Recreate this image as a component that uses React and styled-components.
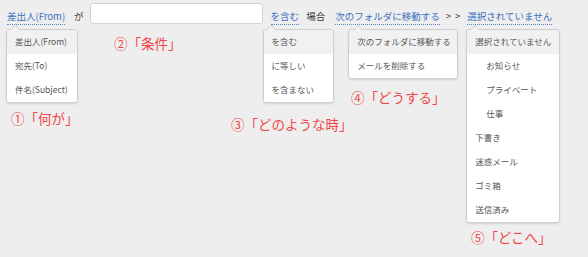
import React from "react";
import styled, { createGlobalStyle } from "styled-components";

const Global = createGlobalStyle`
  html, body { margin: 0; padding: 0; background: #eeeeee; }
  body { font-family: "Noto Sans CJK JP", "Noto Sans", sans-serif; }
`;

const Page = styled.div`
  position: relative;
  width: 588px;
  height: 257px;
  background: #eeeeee;
  overflow: hidden;
`;

const Bar = styled.div`
  display: flex;
  align-items: flex-start;
  padding: 3px 0 0 7px;
  font-size: 9.5px;
  color: #333;
`;

const Trigger = styled.div`
  position: relative;
  margin-top: 7px;
  margin-left: ${(p) => p.$ml || 0}px;
  line-height: 13px;
  padding-bottom: 1px;
  color: #3b6fbf;
  border-bottom: 1px dotted #5a86c9;
  white-space: nowrap;
`;

const Plain = styled.span`
  margin-top: 7px;
  margin-left: ${(p) => p.$ml || 0}px;
  line-height: 13px;
  color: #333;
  white-space: nowrap;
  letter-spacing: ${(p) => p.$ls || 0}px;
`;

const Input = styled.div`
  margin-left: ${(p) => p.$ml || 0}px;
  width: 171px;
  height: 19px;
  background: #fff;
  border: 1px solid #d2d2d2;
  border-radius: 3px;
`;

const Menu = styled.ul`
  position: absolute;
  top: 19px;
  left: ${(p) => p.$left}px;
  width: ${(p) => p.$w}px;
  margin: 0;
  padding: 0;
  list-style: none;
  background: #fff;
  border: 1px solid #cfcfcf;
  border-radius: 3px;
  box-shadow: 0 1px 2px rgba(0, 0, 0, 0.12);
  font-size: 8.5px;
  color: #555;
  z-index: 2;

  &::before {
    content: "";
    position: absolute;
    top: -5px;
    left: ${(p) => p.$caret}px;
    border-left: 5px solid transparent;
    border-right: 5px solid transparent;
    border-bottom: 5px solid #cfcfcf;
  }
  &::after {
    content: "";
    position: absolute;
    top: -4px;
    left: ${(p) => p.$caret + 1}px;
    border-left: 4px solid transparent;
    border-right: 4px solid transparent;
    border-bottom: 4px solid #f2f2f2;
  }
`;

const Item = styled.li`
  height: 24px;
  line-height: 23px;
  padding-left: ${(p) => (p.$indent ? 19 : 8)}px;
  background: ${(p) => (p.$active ? "#f1f1f1" : "#fff")};
  white-space: nowrap;
  &:first-child { border-radius: 3px 3px 0 0; }
  &:last-child { border-radius: 0 0 3px 3px; }
`;

const Note = styled.div`
  position: absolute;
  left: ${(p) => p.$x}px;
  top: ${(p) => p.$y}px;
  font-size: 13.5px;
  line-height: 16px;
  color: #f04848;
  white-space: nowrap;
  font-family: "Noto Sans CJK JP", sans-serif;
`;

const Dropdown = ({ label, ml, left, w, caret, items }) => (
  <Trigger $ml={ml}>
    {label}
    <Menu $left={left} $w={w} $caret={caret}>
      {items.map((it, i) => (
        <Item key={i} $active={i === 0} $indent={it.indent}>
          {it.text}
        </Item>
      ))}
    </Menu>
  </Trigger>
);

const t = (text, indent) => ({ text, indent });

export default function App() {
  return (
    <Page>
      <Global />
      <Bar>
        <Dropdown
          label="差出人(From)"
          left={-1}
          w={70}
          caret={3}
          items={[t("差出人(From)"), t("宛先(To)"), t("件名(Subject)")]}
        />
        <Plain $ml={9}>が</Plain>
        <Input $ml={6} />
        <Dropdown
          label="を含む"
          ml={8}
          left={-8}
          w={69}
          caret={2}
          items={[t("を含む"), t("に等しい"), t("を含まない")]}
        />
        <Plain $ml={7}>場合</Plain>
        <Dropdown
          label="次のフォルダに移動する"
          ml={10}
          left={13}
          w={108}
          caret={4}
          items={[t("次のフォルダに移動する"), t("メールを削除する")]}
        />
        <Plain $ml={6} $ls={1}>&gt; &gt;</Plain>
        <Dropdown
          label="選択されていません"
          ml={6}
          left={-1}
          w={92}
          caret={3}
          items={[
            t("選択されていません"),
            t("お知らせ", true),
            t("プライベート", true),
            t("仕事", true),
            t("下書き"),
            t("迷惑メール"),
            t("ゴミ箱"),
            t("送信済み"),
          ]}
        />
      </Bar>
      <Note $x={114} $y={35}>②「条件」</Note>
      <Note $x={11} $y={110}>①「何が」</Note>
      <Note $x={231} $y={116}>③「どのような時」</Note>
      <Note $x={351} $y={89}>④「どうする」</Note>
      <Note $x={471} $y={229}>⑤「どこへ」</Note>
    </Page>
  );
}
